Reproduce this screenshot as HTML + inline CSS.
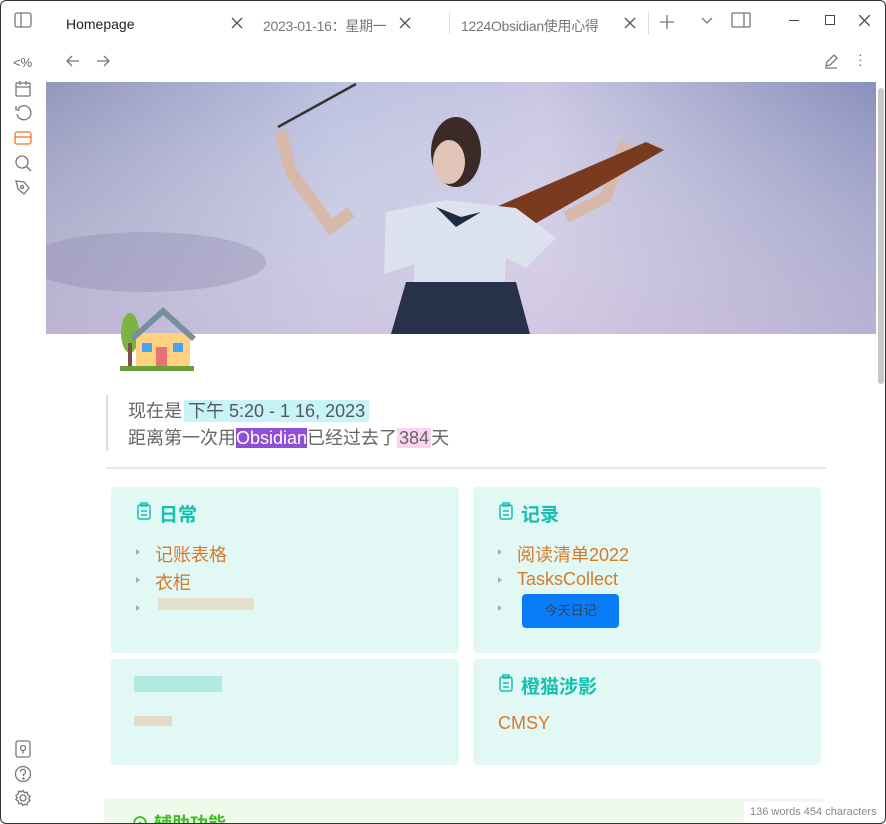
<!DOCTYPE html>
<html><head><meta charset="utf-8"><style>
*{box-sizing:border-box;margin:0;padding:0}
html,body{width:886px;height:824px;overflow:hidden}
body{background:#fff;font-family:"Liberation Sans","Noto Sans CJK SC",sans-serif;position:relative}
.frame{position:absolute;left:0;top:0;width:886px;height:824px;border:1px solid #333;border-radius:6px;pointer-events:none}
.a{position:absolute}
.ic{position:absolute;stroke:#777;fill:none;stroke-width:1.3}
.card{position:absolute;background:#e2f8f5;border-radius:4px}
.h{position:absolute;color:#14c0b0;font-weight:bold;font-size:19px}
.li{position:absolute;color:#d67a2a;font-size:18px}
.bul{position:absolute;width:0;height:0;border-left:4px solid #aaa;border-top:3.5px solid transparent;border-bottom:3.5px solid transparent}
.blur{position:absolute;background:#e4c8a8;opacity:.8}
</style></head><body>
<svg class="ic" style="left:14px;top:12px" width="18" height="16"><rect x="1" y="1" width="16" height="14" rx="2"/><line x1="7" y1="1" x2="7" y2="15"/></svg>
<div class="a" style="left:66px;top:16px;font-size:14px;color:#222">Homepage</div>
<svg class="ic" style="left:231px;top:17px;stroke:#555" width="12" height="12"><path d="M1 1l10 10M11 1L1 11"/></svg>
<div class="a" style="left:263px;top:16px;font-size:14px;color:#777;letter-spacing:-.3px">2023-01-16：星期一</div>
<svg class="ic" style="left:399px;top:17px;stroke:#555" width="12" height="12"><path d="M1 1l10 10M11 1L1 11"/></svg>
<div class="a" style="left:449px;top:12px;width:1px;height:22px;background:#ddd"></div>
<div class="a" style="left:461px;top:16px;font-size:14px;color:#777;letter-spacing:-.3px">1224Obsidian使用心得</div>
<svg class="ic" style="left:624px;top:17px;stroke:#555" width="12" height="12"><path d="M1 1l10 10M11 1L1 11"/></svg>
<div class="a" style="left:648px;top:12px;width:1px;height:22px;background:#ddd"></div>
<svg class="ic" style="left:660px;top:15px" width="14" height="14"><path d="M7 0v14M0 7h14"/></svg>
<svg class="ic" style="left:700px;top:16px" width="14" height="10"><path d="M2 2l5 5 5-5"/></svg>
<svg class="ic" style="left:731px;top:12px" width="20" height="16"><rect x="1" y="1" width="18" height="14" rx="1"/><line x1="13" y1="1" x2="13" y2="15"/></svg>
<div class="a" style="left:789px;top:20px;width:10px;height:1px;background:#444"></div>
<div class="a" style="left:825px;top:15px;width:10px;height:10px;border:1px solid #444"></div>
<svg class="ic" style="left:859px;top:15px;stroke:#444" width="11" height="11"><path d="M0 0l11 11M11 0L0 11"/></svg>
<div class="a" style="left:13px;top:55px;font-size:13px;color:#666">&lt;%</div>
<svg class="ic" style="left:65px;top:54px" width="16" height="14"><path d="M14 7H2M7 2L2 7l5 5"/></svg>
<svg class="ic" style="left:95px;top:54px" width="16" height="14"><path d="M2 7h12M9 2l5 5-5 5"/></svg>
<svg class="ic" style="left:823px;top:53px" width="16" height="16"><path d="M3 13l1-4 7-7 3 3-7 7z M2 15h12"/></svg>
<div class="a" style="left:858px;top:52px;font-size:14px;color:#666;line-height:5px">·<br>·<br>·</div>
<svg class="ic" style="left:14px;top:80px" width="18" height="18"><rect x="2" y="3" width="14" height="13" rx="1"/><path d="M2 7h14M6 1v4M12 1v4"/></svg>
<svg class="ic" style="left:14px;top:104px" width="18" height="18"><path d="M4 5a7 7 0 1 1-1 5M2 2v4h4"/></svg>
<svg class="ic" style="left:14px;top:130px;stroke:#e8792a" width="18" height="16"><rect x="1" y="2" width="16" height="12" rx="2"/><path d="M1 7h16"/></svg>
<svg class="ic" style="left:14px;top:154px" width="18" height="18"><circle cx="8" cy="8" r="6"/><path d="M12.5 12.5L17 17"/></svg>
<svg class="ic" style="left:14px;top:178px" width="18" height="18"><path d="M2 3l8 1 5 6-5 6-6-5z M10 16l5-6"/><circle cx="8" cy="9" r="1.5"/></svg>
<svg class="ic" style="left:14px;top:740px" width="18" height="18"><rect x="2" y="1" width="14" height="16" rx="2"/><circle cx="9" cy="8" r="2.5"/><path d="M9 10.5v3"/></svg>
<svg class="ic" style="left:14px;top:765px" width="18" height="18"><circle cx="9" cy="9" r="7.5"/><path d="M6.5 7a2.5 2.5 0 1 1 3 2.3V11"/><circle cx="9.5" cy="13.5" r=".6"/></svg>
<svg class="ic" style="left:14px;top:789px" width="18" height="18"><circle cx="9" cy="9" r="3"/><path d="M9 1.5l1.5 2.3 2.7-.6.6 2.7 2.3 1.5-1.4 2.1 1.4 2.1-2.3 1.5-.6 2.7-2.7-.6L9 16.5l-1.5-2.3-2.7.6-.6-2.7-2.3-1.5 1.4-2.1-1.4-2.1 2.3-1.5.6-2.7 2.7.6z"/></svg>
<svg class="a" style="left:46px;top:82px" width="830" height="252">
<defs><linearGradient id="g" x1="0" y1="0" x2="1" y2="0"><stop offset="0" stop-color="#9497bd"/><stop offset=".35" stop-color="#bcc1e0"/><stop offset=".6" stop-color="#c9c6e2"/><stop offset="1" stop-color="#8a90bd"/></linearGradient>
<linearGradient id="v" x1="0" y1="0" x2="0" y2="1"><stop offset="0" stop-color="#fff" stop-opacity="0"/><stop offset="1" stop-color="#d8c8e0" stop-opacity=".6"/></linearGradient></defs>
<rect width="830" height="252" fill="url(#g)"/><rect width="830" height="252" fill="url(#v)"/>
<ellipse cx="100" cy="180" rx="120" ry="30" fill="#8a88ad" opacity=".35"/>
<path d="M232 45L310 2" stroke="#333" stroke-width="2.5"/>
<path d="M235 50l10 40 40 55 20-15" stroke="#d8b8a8" stroke-width="12" fill="none"/>
<path d="M580 60l-20 55-40 20" stroke="#d8b8a8" stroke-width="12" fill="none"/>
<path d="M450 125l150-65 18 8-140 80z" fill="#7a3a20"/>
<ellipse cx="410" cy="70" rx="25" ry="35" fill="#3a2a28"/>
<ellipse cx="403" cy="80" rx="16" ry="22" fill="#e2c4b8"/>
<path d="M340 130l60-12 70 8 40 30-30 30-20-10-4 76H370l-2-70-30 10z" fill="#dde2ef"/>
<path d="M390 125l20 20 25-15-20 5z" fill="#1e2a40"/>
<path d="M360 200h110l14 52H345z" fill="#27324a"/>
</svg>
<svg class="a" style="left:118px;top:303px" width="80" height="72">
<ellipse cx="12" cy="30" rx="9" ry="20" fill="#7cb342"/><rect x="10" y="40" width="4" height="25" fill="#795548"/>
<rect x="18" y="30" width="54" height="35" fill="#ffd180"/>
<path d="M12 34L45 4l33 30-4 4-29-26-29 26z" fill="#78909c"/>
<rect x="24" y="40" width="10" height="9" fill="#42a5f5"/><rect x="55" y="40" width="10" height="9" fill="#42a5f5"/>
<rect x="38" y="44" width="11" height="21" fill="#e57373"/>
<rect x="2" y="63" width="74" height="5" fill="#689f38"/>
</svg>
<div class="a" style="left:106px;top:395px;width:2px;height:56px;background:#ddd"></div>
<div class="a" style="left:128px;top:398px;font-size:18px;color:#666;line-height:27px;white-space:nowrap">现在是<span style="background:#c8f4f6;padding:1px 4px;margin-left:2px;color:#556">下午 5:20 - 1 16, 2023</span><br>距离第一次用<span style="background:#8e4fd8;color:#fff">Obsidian</span>已经过去了<span style="background:#fcd4f2;padding:0 2px">384</span>天</div>
<div class="a" style="left:106px;top:467px;width:720px;height:2px;background:#e6e6e6"></div>
<div class="card" style="left:111px;top:487px;width:348px;height:166px"></div>
<div class="card" style="left:473px;top:487px;width:348px;height:166px"></div>
<div class="card" style="left:111px;top:659px;width:348px;height:106px"></div>
<div class="card" style="left:473px;top:659px;width:348px;height:106px"></div>
<svg class="ic" style="left:137px;top:502px;stroke:#14c0b0;stroke-width:1.5" width="14" height="18"><rect x="1" y="3" width="12" height="14" rx="2"/><rect x="4" y="1" width="6" height="3"/><path d="M4 9h6M4 13h6"/></svg>
<div class="h" style="left:159px;top:500px">日常</div>
<div class="bul" style="left:136px;top:549px"></div><div class="li" style="left:155px;top:541px">记账表格</div>
<div class="bul" style="left:136px;top:577px"></div><div class="li" style="left:155px;top:569px">衣柜</div>
<div class="bul" style="left:136px;top:605px"></div>
<div class="blur" style="left:158px;top:598px;width:96px;height:12px;opacity:.5"></div>
<svg class="ic" style="left:499px;top:502px;stroke:#14c0b0;stroke-width:1.5" width="14" height="18"><rect x="1" y="3" width="12" height="14" rx="2"/><rect x="4" y="1" width="6" height="3"/><path d="M4 9h6M4 13h6"/></svg>
<div class="h" style="left:521px;top:500px">记录</div>
<div class="bul" style="left:498px;top:549px"></div><div class="li" style="left:517px;top:541px">阅读清单2022</div>
<div class="bul" style="left:498px;top:577px"></div><div class="li" style="left:517px;top:569px">TasksCollect</div>
<div class="bul" style="left:498px;top:605px"></div>
<div class="a" style="left:522px;top:594px;width:97px;height:34px;background:#0a7cf8;border-radius:4px;color:#345;font-size:13px;text-align:center;line-height:34px">今天日记</div>
<div class="a" style="left:134px;top:676px;width:88px;height:16px;background:#9ce4dc;opacity:.7"></div>
<div class="blur" style="left:134px;top:716px;width:38px;height:10px;opacity:.6"></div>
<svg class="ic" style="left:499px;top:674px;stroke:#14c0b0;stroke-width:1.5" width="14" height="18"><rect x="1" y="3" width="12" height="14" rx="2"/><rect x="4" y="1" width="6" height="3"/><path d="M4 9h6M4 13h6"/></svg>
<div class="h" style="left:521px;top:672px">橙猫涉影</div>
<div class="li" style="left:498px;top:713px">CMSY</div>
<div class="a" style="left:104px;top:798px;width:720px;height:26px;background:#effaea;border-radius:4px 4px 0 0"></div>
<div class="a" style="left:131px;top:810px;font-size:18px;color:#3cbf20;font-weight:bold;white-space:nowrap">⊙ 辅助功能 ⌄</div>
<div class="a" style="left:744px;top:802px;width:142px;height:22px;background:#fff;font-size:11px;color:#888;padding:4px 6px">136 words 454 characters</div>
<div class="a" style="left:878px;top:88px;width:6px;height:296px;background:#c8c8c8;border-radius:3px"></div>
<div class="frame"></div>
</body></html>
